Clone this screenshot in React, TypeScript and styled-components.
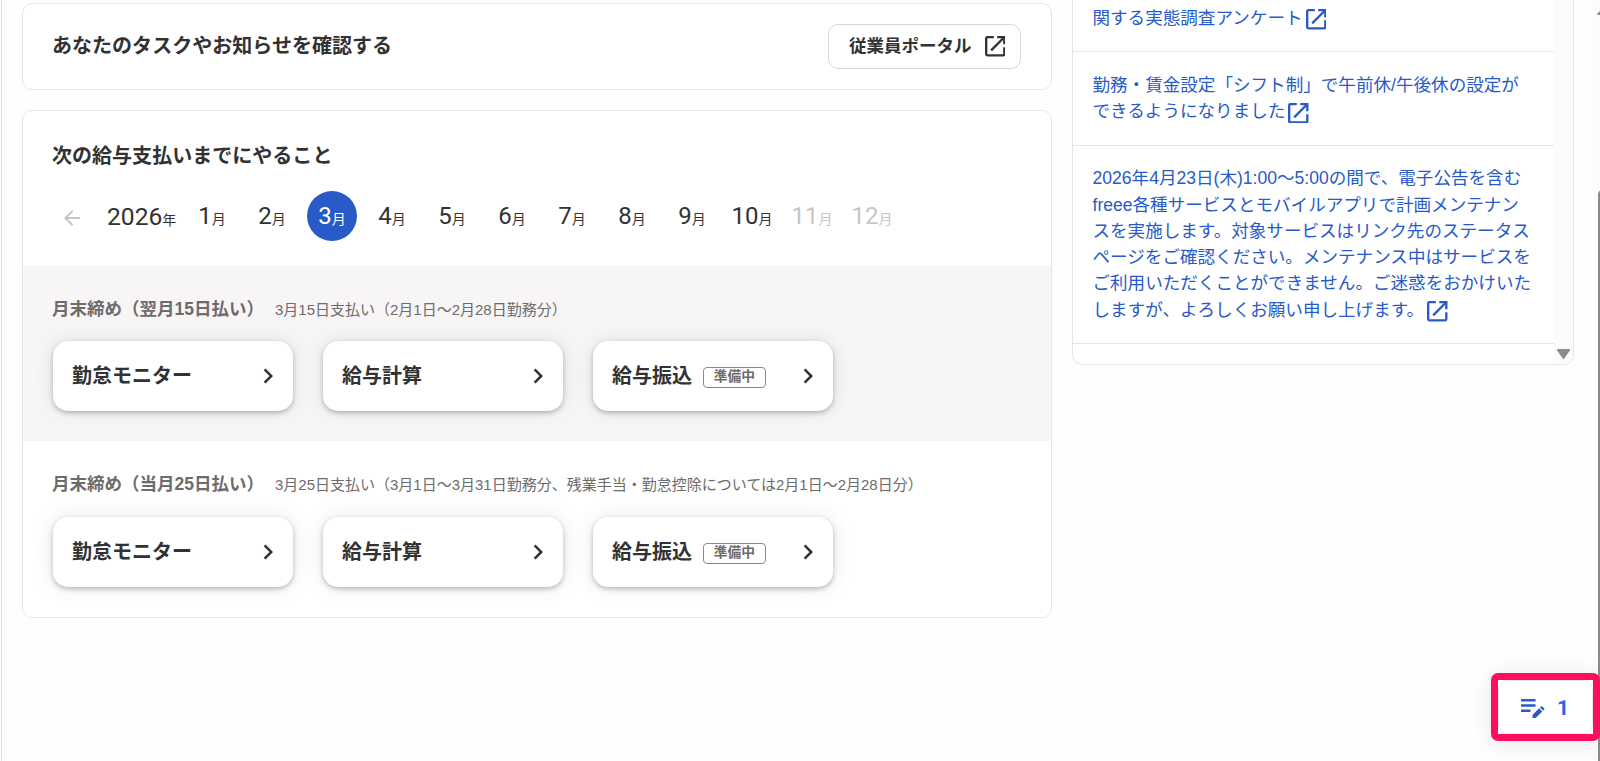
import React from "react";
import styled, { createGlobalStyle } from "styled-components";

const GlobalStyle = createGlobalStyle`
  * { box-sizing: border-box; }
  html, body { margin: 0; padding: 0; }
  body {
    overflow: hidden;
    background: #fefefe;
    color: #323232;
    font-family: "Liberation Sans", "Noto Sans CJK JP", sans-serif;
  }
  p, h2, h3 { margin: 0; }
  button { font: inherit; color: inherit; }
`;

const Page = styled.div`
  position: relative;
  display: flex;
  align-items: flex-start;
  gap: 20px;
  width: 1600px;
  height: 761px;
  overflow: hidden;
  padding-left: 22px;
`;

const LeftEdge = styled.div`
  position: absolute;
  left: 1px;
  top: 0;
  bottom: 0;
  width: 1px;
  background: #dfe4fa;
  box-shadow: 0 0 6px rgba(90, 110, 190, 0.22);
`;

const Main = styled.main`
  display: flex;
  flex-direction: column;
  gap: 20px;
  width: 1030px;
  padding-top: 3px;
`;

const Card = styled.section`
  border: 1px solid #e6e4e4;
  border-radius: 10px;
  background: #fff;
  overflow: hidden;
`;

const PortalCard = styled(Card)`
  display: flex;
  align-items: center;
  justify-content: space-between;
  height: 87px;
  padding: 0 30px 0 29px;
`;

const Heading = styled.h2<{ $raised?: boolean }>`
  padding-bottom: ${(p) => (p.$raised ? "2px" : "0")};
  font-size: 20.04px;
  line-height: 30px;
  font-weight: 700;
`;

const PortalButton = styled.button`
  display: flex;
  align-items: center;
  justify-content: space-between;
  width: 193px;
  height: 45px;
  padding: 0 15px 0 20px;
  border: 1px solid #d9d6d6;
  border-radius: 10px;
  background: #fff;
  font-size: 17.5px;
  font-weight: 700;
`;

const PortalLabel = styled.span`
  padding-bottom: 4px;
`;

const TodoCard = styled(Card)`
  height: 508px;
`;

const TodoHeader = styled.div`
  height: 155px;
  padding: 30px 29px 0;
`;

const Months = styled.div`
  display: flex;
  align-items: center;
  gap: 10px;
  height: 50px;
  margin-top: 20px;
  padding-left: 8px;
  font-family: Roboto, "Noto Sans CJK JP", sans-serif;
  font-size: 24px;
  line-height: 51px;

  & > svg { margin-top: 4px; }
`;

const Year = styled.div`
  width: 70px;
  height: 50px;
  margin-left: 13px;
  font-size: 24.6px;
  white-space: nowrap;
`;

const Unit = styled.span`
  font-size: 14px;
`;

const Month = styled.div<{ $state?: "active" | "disabled" }>`
  width: 50px;
  height: 50px;
  border-radius: 50%;
  text-align: center;
  white-space: nowrap;
  background: ${(p) => (p.$state === "active" ? "#285ac8" : "transparent")};
  color: ${(p) =>
    p.$state === "active" ? "#fff" : p.$state === "disabled" ? "#c8c5c5" : "#323232"};
`;

const Group = styled.div<{ $shaded?: boolean }>`
  display: flex;
  flex-direction: column;
  gap: ${(p) => (p.$shaded ? "19px" : "20px")};
  height: ${(p) => (p.$shaded ? "175px" : "176px")};
  padding: 30px 30px 0;
  background: ${(p) => (p.$shaded ? "#f7f5f6" : "#fff")};
`;

const GroupTitle = styled.div`
  display: flex;
  align-items: center;
  gap: 11px;
  height: 26px;
  margin-left: -1px;
  color: #6e6b6b;
  white-space: nowrap;
`;

const GroupName = styled.h3`
  font-size: 17.5px;
  line-height: 26px;
  font-weight: 700;
`;

const GroupPeriod = styled.span`
  padding-top: 1px;
  font-size: 15px;
  line-height: 24px;
`;

const Actions = styled.div`
  display: flex;
  gap: 30px;
`;

const Action = styled.button`
  display: flex;
  align-items: center;
  width: 240px;
  height: 70px;
  padding: 0 10px 0 19px;
  border: 0;
  border-radius: 15px;
  background: #fff;
  box-shadow: 0 2px 5px rgba(0, 0, 0, 0.25), 0 0 22px rgba(0, 0, 0, 0.09);
  font-size: 20px;
  font-weight: 700;
  text-align: left;

  & > svg { margin-left: auto; }
`;

const ActionLabel = styled.span`
  padding-bottom: 3px;
`;

const Badge = styled.span`
  width: 63px;
  height: 21px;
  margin: 3px 0 0 11px;
  border: 1px solid #8c8989;
  border-radius: 4px;
  color: #6e6b6b;
  font-size: 13.75px;
  line-height: 17px;
  text-align: center;
`;

const News = styled.aside`
  display: flex;
  width: 502px;
  height: 365px;
  overflow: hidden;
  border: 1px solid #e6e4e4;
  border-top: 0;
  border-radius: 0 0 10px 10px;
  background: #fff;
`;

const NewsList = styled.div`
  width: 481px;
`;

const NewsItem = styled.div`
  padding: 19.5px 20px 20.5px 19.5px;
  border-bottom: 1px solid #e6e4e4;
  color: #285ac8;
  font-size: 17.57px;
  line-height: 26.25px;
  white-space: nowrap;

  &:first-child { padding-top: 4.5px; }

  svg {
    margin: 0 0 -6px 3px;
    vertical-align: baseline;
  }
`;

const NewsScroll = styled.div`
  display: flex;
  flex: 1;
  align-items: flex-end;
  justify-content: center;
  padding-bottom: 5px;
  background: #fbfbfb;
`;

const PageScroll = styled.div`
  position: absolute;
  top: 0;
  right: 0;
  width: 7px;
  height: 761px;
  overflow: hidden;
  background: #fcfcfc;
`;

const PageThumb = styled.div`
  position: absolute;
  top: 190px;
  left: 5px;
  width: 9px;
  height: 600px;
  border-radius: 5px;
  background: #8b8b8b;
`;

const ScrollUp = styled.svg`
  position: absolute;
  top: 9px;
  left: 4px;
`;

const MemoFrame = styled.div`
  position: absolute;
  left: 1491px;
  top: 673px;
  width: 109px;
  height: 68px;
  border: 7px solid #ff0f5b;
  border-radius: 7px;
  background: #fff;
  box-shadow: 0 2px 20px rgba(0, 0, 0, 0.1);
`;

const Memo = styled.button`
  display: flex;
  align-items: center;
  gap: 12px;
  width: 95px;
  height: 54px;
  padding: 4px 0 0 22px;
  border: 1px solid #e9e9e9;
  border-radius: 10px;
  background: #fff;
  color: #2864f0;
  font-family: Roboto, sans-serif;
  font-size: 21px;
  font-weight: 700;
  line-height: 30px;
`;

const MemoCount = styled.span`
  padding-bottom: 3px;
`;

const ExternalIcon = () => (
  <svg width="20.5" height="20.5" viewBox="0 0 20 20" fill="none" stroke="currentColor" strokeWidth="2.3">
    <path d="M8.6 1.15H2.4a1.25 1.25 0 0 0-1.25 1.25v15.2a1.25 1.25 0 0 0 1.25 1.25h15.2a1.25 1.25 0 0 0 1.25-1.25V11" />
    <path d="M12 1.15h6.85V8" />
    <path d="M18.5 1.5L6 14" />
  </svg>
);

const Chevron = () => (
  <svg width="30" height="30" viewBox="0 0 24 24" fill="currentColor">
    <path d="M8.59 16.59L13.17 12 8.59 7.41 10 6l6 6-6 6z" />
  </svg>
);

const BackArrow = () => (
  <svg width="24" height="24" viewBox="0 0 24 24" fill="#c8c5c5">
    <path d="M20 11H7.83l5.59-5.59L12 4l-8 8 8 8 1.41-1.41L7.83 13H20z" />
  </svg>
);

const MemoIcon = () => (
  <svg width="24" height="20" viewBox="0 0 24 20" fill="#285ac8">
    <path d="M0 0h14.5v2.5H0zM0 5.3h14.5v2.5H0zM0 10.5h9.5v2.5H0z" />
    <path d="M11.5 15.9l6.6-6.6 3.2 3.2-6.6 6.6h-3.2zM19 8.4l.9-.9a1 1 0 0 1 1.4 0l1.8 1.8a1 1 0 0 1 0 1.4l-.9.9z" />
  </svg>
);

const months = [1, 2, 3, 4, 5, 6, 7, 8, 9, 10, 11, 12];

const groups = [
  {
    name: "月末締め（翌月15日払い）",
    period: "3月15日支払い（2月1日～2月28日勤務分）",
    shaded: true,
  },
  {
    name: "月末締め（当月25日払い）",
    period: "3月25日支払い（3月1日～3月31日勤務分、残業手当・勤怠控除については2月1日～2月28日分）",
    shaded: false,
  },
];

const actions = [
  { label: "勤怠モニター" },
  { label: "給与計算" },
  { label: "給与振込", badge: "準備中" },
];

const news = [
  ["関する実態調査アンケート"],
  ["勤務・賃金設定「シフト制」で午前休/午後休の設定が", "できるようになりました"],
  [
    "2026年4月23日(木)1:00～5:00の間で、電子公告を含む",
    "freee各種サービスとモバイルアプリで計画メンテナン",
    "スを実施します。対象サービスはリンク先のステータス",
    "ページをご確認ください。メンテナンス中はサービスを",
    "ご利用いただくことができません。ご迷惑をおかけいた",
    "しますが、よろしくお願い申し上げます。",
  ],
];

export default function App() {
  return (
    <Page>
      <GlobalStyle />
      <LeftEdge />
      <Main>
        <PortalCard>
          <Heading $raised>あなたのタスクやお知らせを確認する</Heading>
          <PortalButton>
            <PortalLabel>従業員ポータル</PortalLabel>
            <ExternalIcon />
          </PortalButton>
        </PortalCard>
        <TodoCard>
          <TodoHeader>
            <Heading>次の給与支払いまでにやること</Heading>
            <Months>
              <BackArrow />
              <Year>
                2026<Unit>年</Unit>
              </Year>
              {months.map((m) => (
                <Month key={m} $state={m === 3 ? "active" : m > 10 ? "disabled" : undefined}>
                  {m}
                  <Unit>月</Unit>
                </Month>
              ))}
            </Months>
          </TodoHeader>
          {groups.map((g) => (
            <Group key={g.name} $shaded={g.shaded}>
              <GroupTitle>
                <GroupName>{g.name}</GroupName>
                <GroupPeriod>{g.period}</GroupPeriod>
              </GroupTitle>
              <Actions>
                {actions.map((a) => (
                  <Action key={a.label}>
                    <ActionLabel>{a.label}</ActionLabel>
                    {a.badge && <Badge>{a.badge}</Badge>}
                    <Chevron />
                  </Action>
                ))}
              </Actions>
            </Group>
          ))}
        </TodoCard>
      </Main>
      <News>
        <NewsList>
          {news.map((lines) => (
            <NewsItem key={lines[0]}>
              {lines.map((line, i) => (
                <p key={line}>
                  {line}
                  {i === lines.length - 1 && <ExternalIcon />}
                </p>
              ))}
            </NewsItem>
          ))}
        </NewsList>
        <NewsScroll>
          <svg width="13" height="10" viewBox="0 0 13 10" fill="#8b8b8b">
            <path d="M1 0h11a1 1 0 0 1 .8 1.6L7.3 9.4a1 1 0 0 1-1.6 0L.2 1.6A1 1 0 0 1 1 0z" />
          </svg>
        </NewsScroll>
      </News>
      <PageScroll>
        <ScrollUp width="13" height="6" viewBox="0 0 13 6" fill="#8b8b8b">
          <path d="M0 5L5 0h3l5 5-.5 1H.5z" />
        </ScrollUp>
        <PageThumb />
      </PageScroll>
      <MemoFrame>
        <Memo>
          <MemoIcon />
          <MemoCount>1</MemoCount>
        </Memo>
      </MemoFrame>
    </Page>
  );
}
